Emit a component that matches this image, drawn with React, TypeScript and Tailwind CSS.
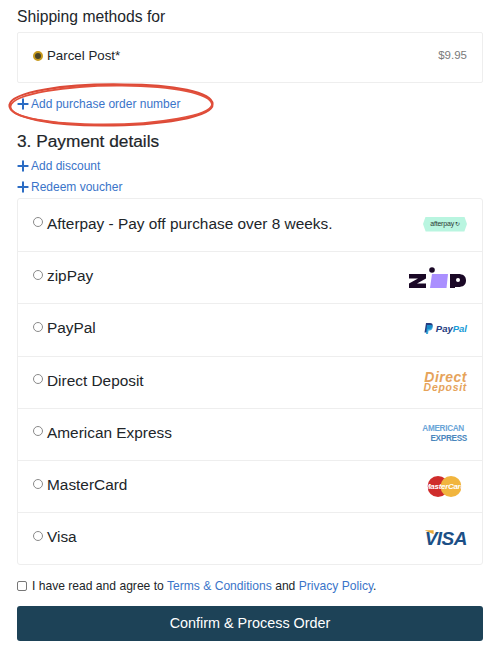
import React from 'react';
import { Plus } from 'lucide-react';

const AfterpayLogo = () => (
  <div className="-mt-[2px] flex h-[15px] w-[44px] items-center justify-center bg-[#b9f5e0] text-[7px] tracking-[-0.2px] text-[#2c3a35] [clip-path:polygon(6%_0,94%_0,100%_50%,94%_100%,6%_100%,0_50%)]">
    afterpay
    <span className="ml-[1px] text-[6px]">↻</span>
  </div>
);

const ZipLogo = () => (
  <svg width="58" height="24" viewBox="0 0 58 24" className="block">
    <circle cx="23" cy="4" r="2.800" fill="#1a0826" />
    <path d="M0 8h17v4.500L8 17.500h9V22H0v-4.500l9-5H0z" fill="#1a0826" />
    <path d="M23 8h16l-1.500 14H21z" fill="#aa8fff" />
    <path d="M41 8h8c5 0 8 2 8 6.500S54 21 49 21h-3v1h-5z" fill="#1a0826" />
    <circle cx="49" cy="14" r="2" fill="#fff" />
  </svg>
);

const PayPalLogo = () => (
  <div className="-mt-[2px] flex items-center gap-[3px] text-[9.500px] font-bold italic leading-none">
    <svg width="9" height="11" viewBox="0 0 9 11" className="block">
      <path d="M2 0h4c2 0 3 1 2.600 3C8 5 7 6 5 6H3.500L3 9.500H.5z" fill="#253b80" />
      <path d="M3 2h4c1.500 0 2 1 1.700 2.500C8.300 6.500 7 7.500 5.500 7.500H4.500L4 11H2z" fill="#179bd7" opacity="0.85" />
    </svg>
    <span className="text-[#253b80]">
      Pay<span className="text-[#179bd7]">Pal</span>
    </span>
  </div>
);

const DirectDepositLogo = () => (
  <div className="flex flex-col items-end text-[#e6a35a] italic font-bold font-['Liberation_Sans']">
    <span className="h-[11px] text-[14px] leading-[11px] tracking-[0.5px]">Direct</span>
    <span className="h-[9px] text-[10.500px] leading-[9px] tracking-[0.7px]">Deposit</span>
  </div>
);

const AmexLogo = () => (
  <div className="flex flex-col items-end text-[8.200px] font-bold leading-[10px] tracking-[-0.3px] font-['Liberation_Sans']">
    <span className="mr-[3px] text-[#6aa5d8]">AMERICAN</span>
    <span className="text-[#4a86bc]">EXPRESS</span>
  </div>
);

const MasterCardLogo = () => (
  <div className="relative mr-[5px] h-[21px] w-[35px]">
    <svg width="35" height="21" viewBox="0 0 35 21" className="block">
      <circle cx="11" cy="10.500" r="10.500" fill="#cf2c2b" />
      <circle cx="24" cy="10.500" r="10.500" fill="#f1b53e" />
    </svg>
    <span className="absolute inset-0 flex items-center justify-center text-[8px] font-bold italic tracking-[-0.3px] text-white">
      MasterCard
    </span>
  </div>
);

const VisaLogo = () => (
  <div className="relative text-[19px] font-bold italic leading-none tracking-[-0.5px] text-[#1c4f86] font-['Liberation_Sans']">
    <span className="absolute left-0 top-[1px] h-[4px] w-[9px] bg-[#e8a93a] [clip-path:polygon(0_0,100%_0,100%_100%)]" />
    VISA
  </div>
);

const methods = [
  { name: 'Afterpay - Pay off purchase over 8 weeks.', logo: <AfterpayLogo /> },
  { name: 'zipPay', logo: <ZipLogo /> },
  { name: 'PayPal', logo: <PayPalLogo /> },
  { name: 'Direct Deposit', logo: <DirectDepositLogo /> },
  { name: 'American Express', logo: <AmexLogo /> },
  { name: 'MasterCard', logo: <MasterCardLogo /> },
  { name: 'Visa', logo: <VisaLogo /> },
];

const AddLink = ({ label }: { label: string }) => (
  <a className="flex items-center text-[12px] leading-[21px] text-[#3a74c9]">
    <Plus size={16} strokeWidth={3} className="-ml-[2px] -mt-[1px] text-[#2b6cc4]" />
    {label}
  </a>
);

const Radio = () => (
  <span className="block h-[10px] w-[10px] shrink-0 rounded-full border border-[#8a8a8a] bg-white" />
);

const App: React.FC = () => {
  return (
    <div className="relative h-[660px] w-[500px] overflow-hidden bg-white px-[17px] font-['Liberation_Sans',sans-serif] text-[#212529]">
      <h3 className="pt-[7px] text-[15.700px] leading-[20px]">Shipping methods for</h3>

      <div className="mt-[5px] flex h-[51px] items-start justify-between rounded-[2px] border border-[#eeeeee] pl-[15px] pr-[15px] pt-[13px]">
        <div className="flex items-center gap-[4px]">
          <span className="block h-[10px] w-[10px] rounded-full border-[2px] border-[#c79a1e] bg-[#4a4426]" />
          <span className="text-[13.300px] leading-[20px]">Parcel Post*</span>
        </div>
        <span className="pt-[1px] text-[11.500px] leading-[16px] text-[#7a7a7a]">$9.95</span>
      </div>

      <div className="mt-[11px]">
        <AddLink label="Add purchase order number" />
      </div>

      <h2 className="mt-[13px] text-[17.300px] leading-[26px] [-webkit-text-stroke:0.2px_#212529]">3. Payment details</h2>

      <div className="mt-[2px]">
        <AddLink label="Add discount" />
        <AddLink label="Redeem voucher" />
      </div>

      <div className="rounded-[3px] border border-[#eeeeee]">
        {methods.map((m, i) => (
          <div
            key={m.name}
            className={`flex h-[52.200px] items-center justify-between pl-[15px] pr-[15px] ${i > 0 ? 'border-t border-[#eeeeee]' : ''}`}
          >
            <div className="flex items-center gap-[4px] pb-[3px]">
              <span className="-mt-[3px]"><Radio /></span>
              <span className="text-[15.400px] leading-[20px]">{m.name}</span>
            </div>
            {m.logo}
          </div>
        ))}
      </div>

      <div className="mt-[13px] flex items-center gap-[5px] text-[12.100px] leading-[16px]">
        <span className="block h-[10px] w-[10px] rounded-[2px] border border-[#777777]" />
        <span>
          I have read and agree to <a className="text-[#3a74c9]">Terms &amp; Conditions</a> and{' '}
          <a className="text-[#3a74c9]">Privacy Policy</a>.
        </span>
      </div>

      <button className="mt-[12px] flex h-[35px] w-full items-center justify-center rounded-[3px] bg-[#1d4257] text-[14.400px] text-white">
        Confirm &amp; Process Order
      </button>

      {/* hand drawn circle around the link */}
      <svg width="220" height="50" viewBox="0 0 220 50" className="pointer-events-none absolute left-[4px] top-[80px]">
        <path
          d="M5.500 25C7 12 60 3.500 120 4.500c50 0 88 8 88.500 19.500 1 13-52 21.500-110 21.500C50 45.500 4 38 5.500 25z"
          fill="none"
          stroke="#dc4a38"
          strokeWidth="2.200"
        />
        <path
          d="M6.500 26C9 14 62 5 118 5.500c52 .5 89 8 90 19-1 11-54 20-108 20C48 44.500 5 38 6.500 26z"
          fill="none"
          stroke="#e2503c"
          strokeWidth="1.800"
        />
      </svg>
    </div>
  );
};

export default App;
